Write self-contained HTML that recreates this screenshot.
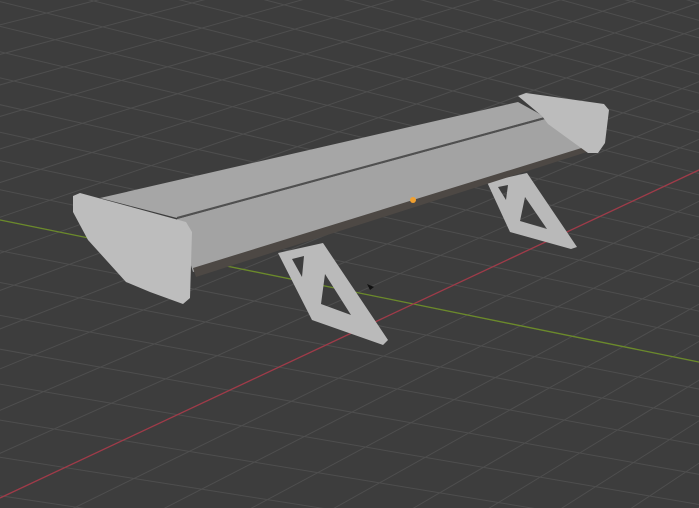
<!DOCTYPE html>
<html><head><meta charset="utf-8"><style>
html,body{margin:0;padding:0;background:#3d3d3d;overflow:hidden;width:699px;height:508px}
svg{display:block}
</style></head><body>
<svg id="s" width="699" height="508" viewBox="0 0 699 508" xmlns="http://www.w3.org/2000/svg">
<rect width="699" height="508" fill="#3d3d3d"/>
<g id="grid" stroke="#4e4e4e" stroke-width="1" fill="none"></g>
<line x1="0" y1="220" x2="699" y2="362" stroke="#6b8a2a" stroke-width="1.3"/>
<line x1="0" y1="498" x2="699" y2="170" stroke="#a03a48" stroke-width="1.3"/>
<!-- right leg -->
<path d="M487,182 L527,173 L577,247 L571,249 L510,232 Z M525,197 L520,221 L547,229 Z M498,187 L508,185 L506,200 Z" fill="#b9b9b9" fill-rule="evenodd"/>
<!-- main wing lower element -->
<polygon points="177,219 545,119 592,140 588,150 193,272" fill="#a3a3a3"/>
<polygon points="193,268 588,146 590,151 196,277" fill="#4d4844"/>
<!-- upper flap -->
<polygon points="100,198 518,102 545,117 177,218" fill="#a6a6a6"/>
<line x1="177" y1="218" x2="545" y2="118" stroke="#505050" stroke-width="2"/>
<!-- right endplate -->
<polygon points="518,96 526,93 604,104 609,110 605,143 598,153 588,153 570,140 548,124 542,116" fill="#bcbcbc"/>
<!-- left endplate -->
<polygon points="73,196 80,193 186,222 192,232 190,298 183,304 150,292 126,282 88,240 73,212" fill="#bdbdbd"/>
<!-- left leg -->
<path d="M278,253 L323,243 L388,340 L383,345 L312,320 Z M325,274 L321,304 L351,315 Z M292,259 L304,256 L302,277 Z" fill="#bababa" fill-rule="evenodd"/>
<circle cx="413" cy="200" r="3" fill="#f0a030"/>
<polygon points="367,284 374,287 370,290" fill="#111"/>
</svg>
<script>
(function(){
var g=document.getElementById('grid'),ns='http://www.w3.org/2000/svg';
var O=[413,304];
var VPu=[2200,-535],VPv=[5200,1280];
function n(a){return Math.hypot(a[0]-O[0],a[1]-O[1]);}
var wu=46/n(VPu),wv=56/n(VPv);
function P(u,v){var d=1+u*wu+v*wv;return [(O[0]+u*wu*VPu[0]+v*wv*VPv[0])/d,(O[1]+u*wu*VPu[1]+v*wv*VPv[1])/d];}
function L(a,b){var l=document.createElementNS(ns,'line');l.setAttribute('x1',a[0]);l.setAttribute('y1',a[1]);l.setAttribute('x2',b[0]);l.setAttribute('y2',b[1]);g.appendChild(l);}
for(var i=-30;i<=300;i++){L(P(i,-20),P(i,300));}
for(var j=-20;j<=300;j++){L(P(-30,j),P(300,j));}
})();
</script>
</body></html>
